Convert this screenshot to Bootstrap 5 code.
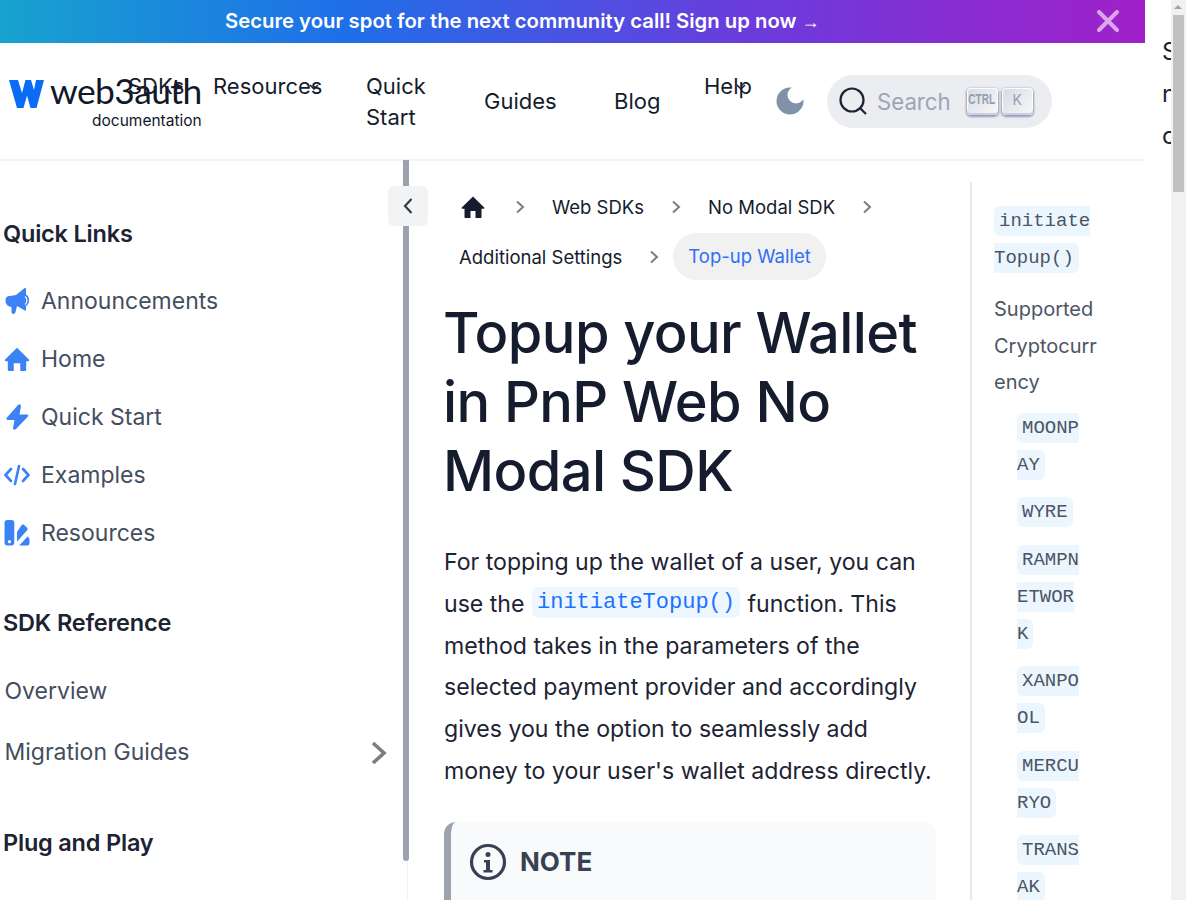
<!doctype html>
<html lang="en">
<head>
<meta charset="utf-8">
<title>Topup your Wallet in PnP Web No Modal SDK</title>
<link href="https://cdn.jsdelivr.net/npm/bootstrap@5.3.0/dist/css/bootstrap.min.css" rel="stylesheet">
<style>
body{font-family:Inter,"Liberation Sans",sans-serif;font-size:23px;line-height:42px;color:#141c2d;overflow:hidden;height:900px;background:#fff}
.shell{height:900px;overflow:hidden}
.docs{width:1145px;flex:none}
.stray{width:26px;flex:none;overflow:hidden;padding:31px 0 0 17px;white-space:nowrap;color:#1c2333;font-size:24px}
.sbar{position:fixed;right:0;top:0;width:15px;height:900px;background:#f1f1f1}
.sbar-up{position:absolute;left:3px;top:5px;width:0;height:0;border-left:4px solid transparent;border-right:4px solid transparent;border-bottom:4px solid #a3a3a3}
.sbar-th{position:absolute;left:2px;top:15px;width:11px;height:177px;background:#c1c1c1}
.promo{height:43px;background:linear-gradient(90deg,#17a3cf 0,#1f6fe8 30%,#6a3cdc 65%,#a020c8 100%);color:#fff;font-size:20.300px;font-weight:600;line-height:42px;white-space:nowrap}
.promo-text{padding-left:225px;width:1090px;flex:none}
.promo-arr{font-family:"Liberation Sans",sans-serif;font-weight:400;font-size:18px}
.promo-x{width:22px;height:22px;margin-left:7px;margin-top:10px;flex:none}
.topbar{height:118px;border-bottom:2px solid #f3f4f6;padding-left:9px}
.brand{width:119px;flex:none;position:relative;align-self:stretch}
.brand-mark{position:absolute;left:0;top:37px;width:35px;height:28px}
.brand-name{position:absolute;left:41px;top:27px;font-size:35.400px;line-height:42px;letter-spacing:-.6px;font-weight:400;color:#10182a;font-family:Lato,Inter,sans-serif;white-space:nowrap}
.brand-sub{position:absolute;left:83px;top:67px;font-size:15.500px;line-height:22px;color:#10182a;white-space:nowrap}
.topnav{font-size:22px;line-height:31px;color:#141c2d}
.tn{position:relative;color:inherit;text-decoration:none;flex:none}
.tn-drop{padding-top:28px}
.tn-mid{align-self:center}
.tn-two{margin-top:2px}
.car{position:absolute;width:10px;height:7px;top:40px}
.moon{width:28px;height:28px;margin-left:24px;flex:none;align-self:center}
.finder{width:225px;height:53px;border-radius:27px;background:#ebedf0;margin-left:23px;align-self:center;padding-left:12px;flex:none;color:#9ba6b8;font-size:22.200px;line-height:53px}
.finder-ic{width:28px;height:28px;margin-right:10px;flex:none}
.key{height:27px;border-radius:4px;background:linear-gradient(-225deg,#d5dbe4,#f8f8f8);box-shadow:inset 0 -2px 0 0 #cdcde6,inset 0 0 1px 1px #fff,0 1px 2px 1px rgba(30,35,90,.4);display:block;flex:none;font-size:14px;line-height:23px;text-align:center;color:#969faf}
.key-c{width:31px;margin-left:16px;font-family:"Liberation Sans",sans-serif;font-weight:700;font-size:14px;overflow:hidden}
.key-c span{display:inline-block;transform:scaleX(.72);margin:0 -6px}
.key-k{width:31px;margin-left:4px}
.rail{width:408px;flex:none;position:relative;border-right:1px solid #f0f1f3;height:800px;padding-top:52px;color:#444e5f}
.thumb{position:absolute;right:-2px;top:-1px;width:6px;height:701px;background:#9ca3af;border-radius:0 0 3px 3px}
.collapse-btn{position:absolute;left:388px;top:25px;width:40px;height:40px;border-radius:6px;background:#f2f3f5;z-index:2}
.rail-h{font-size:23.500px;line-height:42px;font-weight:600;color:#1c2333;margin:0 0 0 3px;letter-spacing:-.2px}
.rail-i{height:58px;line-height:58px;color:#444e5f;white-space:nowrap}
.rail-ic{width:26px;height:26px;margin:0 11px 0 4px;flex:none}
.rail-t{height:61px;line-height:61px;padding-left:4.500px;color:#444e5f}
.main{width:562px;flex:none;padding:21px 34px 0 36px;margin-left:0}
.crumbs{font-size:18.500px;line-height:50px;margin:0 -20px 0 15px;display:flex;flex-wrap:wrap;padding:0;list-style:none}
.crumbs li{display:flex;align-items:center;height:50px}
.cr-home{width:24px;height:24px;margin:0 30px 0 2px}
.cr-sep{width:10px;height:14px;margin:0 27px 0 27px;flex:none}
.crumbs .cr-now{background:#f1f1f2;color:#2f6ef0;border-radius:24px;padding:0 15px;height:47px;line-height:47px;margin-top:1px;margin-left:1px}
h1.ttl{font-size:56px;line-height:69px;font-weight:500;margin:17px 0 36px -1px;color:#141c2d;letter-spacing:-.6px}
.copy{font-size:23.100px;line-height:41.800px;color:#1c2333;margin:0 0 29px 0}
.inl{font-family:"Liberation Mono",monospace;font-size:22px;line-height:1;background:#eef6ff;color:#1a73ff;border-radius:7px;padding:3px 5px;margin:0 1px 0 1px;vertical-align:3.500px}
.note{border-left:7px solid #9ca3af;background:#f9fafb;border-radius:12px;height:200px;padding:20px 0 0 18px}
.note-ic{width:38px;height:38px;margin-right:13px;flex:none}
.note-t{font-size:26px;font-weight:700;line-height:40px;color:#374151}
.toc{width:175px;flex:none;margin-top:21px;border-left:2px solid #e8e9ec;padding:19px 0 0 22px;font-size:20px;line-height:36.600px;color:#4b5563}
.toc-a{width:107px;margin-bottom:17px;word-break:break-all}
.toc-b{padding-left:23px;width:92px;margin-bottom:11.300px;word-break:break-all}
.tc{font-family:"Liberation Mono",monospace;font-size:19px;line-height:1;background:#ebf6ff;border-radius:6px;padding:4px 5px;color:#4b5563}
</style>
</head>
<body>
<div class="shell d-flex">
  <div class="docs">
    <div class="promo d-flex">
      <div class="promo-text">Secure your spot for the next community call! Sign up now <span class="promo-arr">→</span></div>
      <svg class="promo-x" viewBox="0 0 22 22"><path d="M2 2 20 20M20 2 2 20" stroke="#d9a7ec" stroke-width="4" stroke-linecap="round"/></svg>
    </div>
    <nav class="topbar d-flex topnav">
      <div class="brand">
        <svg class="brand-mark" viewBox="0 0 35 28"><path d="M0 0h9l4 13L16.500 0h5.500l3 10L27 0h8l-7.500 28h-6L18 15.500 14.500 28H8z" fill="#0a6cf5"/></svg>
        <span class="brand-name">web3auth</span>
        <span class="brand-sub">documentation</span>
      </div>
      <a class="tn tn-drop" style="width:85px" href="#">SDKs<svg class="car" style="left:45px" viewBox="0 0 10 7"><path d="M2 .5 8 3.500 2 6.500" fill="none" stroke="#141c2d" stroke-width="2"/></svg></a>
      <a class="tn tn-drop" style="width:153px" href="#">Resources<svg class="car" style="left:96px" viewBox="0 0 10 7"><path d="M1 2 5 6 9 2" fill="none" stroke="#141c2d" stroke-width="1.500"/></svg></a>
      <a class="tn tn-mid tn-two" style="width:118px" href="#">Quick<br>Start</a>
      <a class="tn tn-mid" style="width:130px" href="#">Guides</a>
      <a class="tn tn-mid" style="width:90px" href="#">Blog</a>
      <a class="tn tn-drop" style="width:48px" href="#">Help<svg class="car" style="left:32px" viewBox="0 0 10 7"><path d="M1 2 5 6 9 2" fill="none" stroke="#141c2d" stroke-width="1.500"/></svg></a>
      <svg class="moon" viewBox="0 0 28 28"><circle cx="14" cy="14" r="13.500" fill="#8092a8"/><circle cx="20" cy="8" r="8.500" fill="#fff"/></svg>
      <div class="finder d-flex align-items-center">
        <svg class="finder-ic" viewBox="0 0 28 28"><circle cx="13" cy="13" r="11.500" fill="none" stroke="#1c2333" stroke-width="2.200"/><path d="M21 21l6 6" stroke="#1c2333" stroke-width="2.200"/></svg>
        <span>Search</span>
        <span class="key key-c"><span>CTRL</span></span>
        <span class="key key-k">K</span>
      </div>
    </nav>
    <div class="d-flex position-relative">
      <div class="collapse-btn d-flex align-items-center justify-content-center">
        <svg width="12" height="18" viewBox="0 0 12 18"><path d="M9.500 2 3 9l6.500 7" fill="none" stroke="#333b48" stroke-width="2.200"/></svg>
      </div>
      <aside class="rail">
        <div class="thumb"></div>
        <h2 class="rail-h" style="margin-bottom:17px">Quick Links</h2>
        <div class="rail-i d-flex align-items-center">
          <svg class="rail-ic" viewBox="0 0 26 26" fill="#3b82f6"><path d="M1.500 12.500C1.500 9 3.500 8 6 8l6-1 8-6.500C21.500-.5 22 0 22 2v4.500c2.500 1.500 3 3.500 3 5.500 0 3-1 5-3 6v3c0 2-1 2-2 1l-7-4-1.500 6c-.5 2.500-4 2.500-4 0v-5c-4-.5-6-3-6-6.500z"/><path d="M21 8.500c2.500 1.500 2.500 6.500 0 8" fill="none" stroke="#fff" stroke-width="1.200"/></svg>
          <span>Announcements</span>
        </div>
        <div class="rail-i d-flex align-items-center">
          <svg class="rail-ic" viewBox="0 0 24 24" fill="#3b82f6"><path d="M12 1.500 1 12.500c-.6.700-.2 1.500.6 1.500H3.500v8c0 .6.400 1 1 1H9v-7h6v7h4.500c.6 0 1-.4 1-1v-8h1.900c.8 0 1.200-.8.600-1.500z"/></svg>
          <span>Home</span>
        </div>
        <div class="rail-i d-flex align-items-center">
          <svg class="rail-ic" viewBox="0 0 26 26" fill="#3b82f6"><path d="M14.500.5 2.500 14Q2 16 4 16h6.500L9 24q0 3 3 1l12-12.500q1-2-1-2h-7.500L17 2q-.5-2.500-2.500-1.500z"/></svg>
          <span>Quick Start</span>
        </div>
        <div class="rail-i d-flex align-items-center">
          <svg class="rail-ic" viewBox="0 0 26 24" fill="none" stroke="#3b82f6" stroke-width="2.600" stroke-linecap="round" stroke-linejoin="round"><path d="M7 6 1.500 12 7 18M19 6l5.500 6L19 18M15 3l-4 18"/></svg>
          <span>Examples</span>
        </div>
        <div class="rail-i d-flex align-items-center">
          <svg class="rail-ic" viewBox="0 0 24 24" fill="#3b82f6"><path d="M3 0h4c1.500 0 2.500 1 2.500 2.500V21c0 1.500-1 2.500-2.500 2.500H3C1.500 23.500.5 22.500.5 21V2.500C.500 1 1.500 0 3 0zm2 18.500a1.500 1.500 0 1 0 0 3 1.500 1.500 0 0 0 0-3z" fill-rule="evenodd"/><path d="M12 11 16 5c.8-.9 1.800-1 2.600-.3l2.500 2.200c.8.700.9 1.800.2 2.600L12 20zM14 23.500l8-8.500 1.500 2.500v4c0 1.200-.8 2-2 2z"/></svg>
          <span>Resources</span>
        </div>
        <h2 class="rail-h" style="margin-top:40px;margin-bottom:17px">SDK Reference</h2>
        <div class="rail-t">Overview</div>
        <div class="rail-t d-flex justify-content-between align-items-center">
          <span>Migration Guides</span>
          <svg width="18" height="24" viewBox="0 0 18 24" style="margin-right:19px"><path d="M3 2l11 10L3 22" fill="none" stroke="#7d7d7d" stroke-width="3.600"/></svg>
        </div>
        <h2 class="rail-h" style="margin-top:39px">Plug and Play</h2>
      </aside>
      <main class="main">
        <ul class="crumbs">
          <li><svg class="cr-home" viewBox="0 0 24 24" fill="#141c2d"><path d="M12 1.500.800 12.500c-.5.600-.2 1.200.5 1.200H3.500v8.300c0 .6.400 1 1 1H9.500v-7h5v7h5c.6 0 1-.4 1-1v-8.300h2.200c.7 0 1-.6.5-1.200z"/></svg><svg class="cr-sep" style="margin-left:0" viewBox="0 0 10 14"><path d="M2 1.500 8 7l-6 5.500" fill="none" stroke="#7d7d7d" stroke-width="2"/></svg></li>
          <li>Web SDKs<svg class="cr-sep" viewBox="0 0 10 14"><path d="M2 1.500 8 7l-6 5.500" fill="none" stroke="#7d7d7d" stroke-width="2"/></svg></li>
          <li>No Modal SDK<svg class="cr-sep" viewBox="0 0 10 14"><path d="M2 1.500 8 7l-6 5.500" fill="none" stroke="#7d7d7d" stroke-width="2"/></svg></li>
          <li>Additional Settings<svg class="cr-sep" viewBox="0 0 10 14" style="margin-right:13px"><path d="M2 1.500 8 7l-6 5.500" fill="none" stroke="#7d7d7d" stroke-width="2"/></svg></li>
          <li class="cr-now">Top-up Wallet</li>
        </ul>
        <h1 class="ttl">Topup your Wallet in PnP Web No Modal SDK</h1>
        <p class="copy">For topping up the wallet of a user, you can use the <code class="inl">initiateTopup()</code> function. This method takes in the parameters of the selected payment provider and accordingly gives you the option to seamlessly add money to your user's wallet address directly.</p>
        <div class="note">
          <div class="d-flex align-items-center">
            <svg class="note-ic" viewBox="0 0 38 38"><circle cx="19" cy="19" r="16.500" fill="none" stroke="#374151" stroke-width="3.200"/><circle cx="19" cy="11.500" r="2.500" fill="#374151"/><path d="M15 17h6v10h2.500v2.500h-9V27H17v-7.500h-2z" fill="#374151"/></svg>
            <span class="note-t">NOTE</span>
          </div>
        </div>
      </main>
      <div class="toc">
        <div class="toc-a"><code class="tc">initiateTopup()</code></div>
        <div class="toc-a" style="margin-bottom:7px">Supported Cryptocurrency</div>
        <div class="toc-b"><code class="tc">MOONPAY</code></div>
        <div class="toc-b"><code class="tc">WYRE</code></div>
        <div class="toc-b"><code class="tc">RAMPNETWORK</code></div>
        <div class="toc-b"><code class="tc">XANPOOL</code></div>
        <div class="toc-b"><code class="tc">MERCURYO</code></div>
        <div class="toc-b"><code class="tc">TRANSAK</code></div>
      </div>
    </div>
  </div>
  <div class="stray">Sa<br>ne<br>co</div>
</div>
<div class="sbar"><div class="sbar-up"></div><div class="sbar-th"></div></div>
<script src="https://cdn.jsdelivr.net/npm/bootstrap@5.3.0/dist/js/bootstrap.bundle.min.js"></script>
</body>
</html>
